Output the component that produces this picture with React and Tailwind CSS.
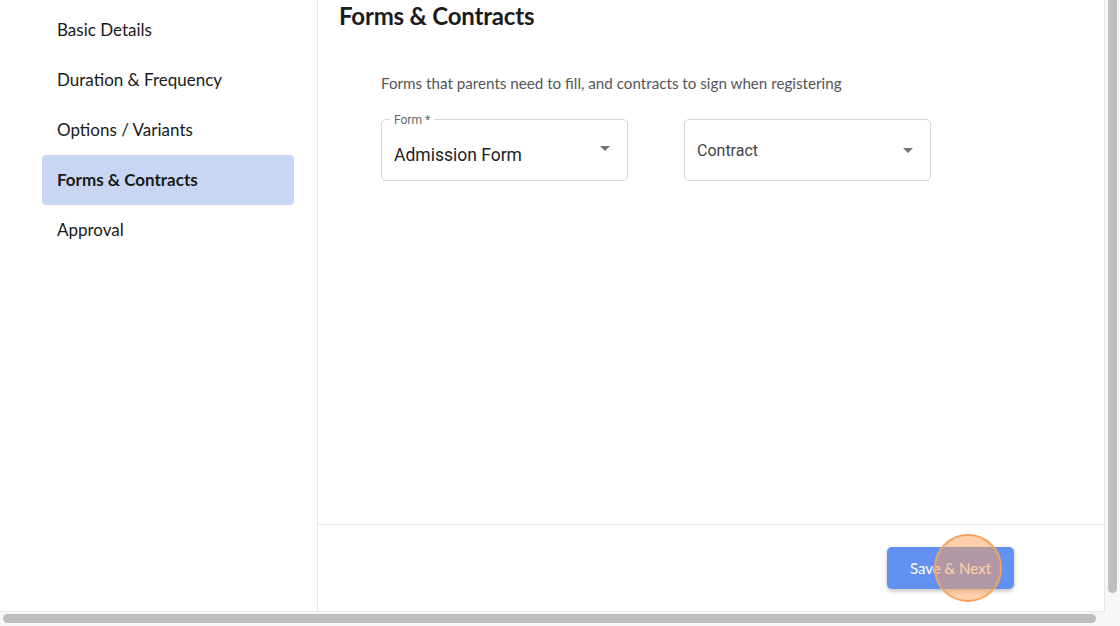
import { useState } from "react";

const steps = [
  "Basic Details",
  "Duration & Frequency",
  "Options / Variants",
  "Forms & Contracts",
  "Approval",
];

function Caret() {
  return (
    <svg width="24" height="24" viewBox="0 0 24 24" className="text-[#757575]">
      <path d="M7 10l5 5 5-5z" fill="currentColor" />
    </svg>
  );
}

function SelectBox({ label, value, placeholder }) {
  return (
    <div className="relative w-[247px] h-[62px] border border-[#d6d6d6] rounded-[5px] flex items-center pl-[12px] pr-[10px]">
      {label && (
        <span className="absolute -top-[6px] left-[8px] bg-white px-[4px] text-[12px] leading-[12px] text-[#666]">
          {label}
        </span>
      )}
      {value ? (
        <div className="flex-1 text-[17.5px] text-[#222] pt-[10px]">{value}</div>
      ) : (
        <div className="flex-1 text-[16px] text-[#444] pt-[2px]">{placeholder}</div>
      )}
      <div className={value ? "-mt-[4px]" : "mt-0"}>
        <Caret />
      </div>
    </div>
  );
}

export default function App() {
  const [active] = useState(3);

  return (
    <div className="w-[1120px] h-[626px] flex bg-white overflow-hidden font-['Lato',sans-serif]">
      <div className="w-[1105px] flex flex-col">
        <div className="flex h-[612px] border-b border-[#e8e8e8]">
          {/* sidebar */}
          <div className="w-[318px] border-r border-[#e6e6e6] pl-[42px] pr-[23px] pt-[5px] flex flex-col">
            {steps.map((s, i) => (
              <div
                key={s}
                className={
                  i === active
                    ? "h-[50px] flex items-center pl-[15px] rounded-[4px] bg-[#c8d6f3] text-[17px] font-bold text-[#1a1a1a]"
                    : "h-[50px] flex items-center pl-[15px] text-[17px] text-[#1a1a1a]"
                }
              >
                {s}
              </div>
            ))}
          </div>

          {/* main */}
          <div className="flex-1 border-r border-[#e6e6e6] flex flex-col">
            <div className="flex-1 pl-[21px]">
              <h1 className="text-[24px] leading-[30px] font-bold text-[#1c1c1c] pt-[1px] tracking-[-0.2px]">
                Forms &amp; Contracts
              </h1>
              <div className="pl-[42px] pt-[41px]">
                <p className="text-[15.2px] text-[#555]">
                  Forms that parents need to fill, and contracts to sign when registering
                </p>
                <div className="flex gap-[56px] mt-[24px] font-['Roboto',sans-serif]">
                  <SelectBox label="Form *" value="Admission Form" />
                  <SelectBox placeholder="Contract" />
                </div>
              </div>
            </div>
            <div className="h-[87px] border-t border-[#e6e6e6] flex justify-end items-start pt-[22px] pr-[90px]">
              <div className="relative">
                <button className="w-[127px] h-[42px] rounded-[5px] bg-[#6291f1] text-white text-[15px] shadow-[0_2px_4px_rgba(0,0,0,0.25)]">
                  Save &amp; Next
                </button>
                <div className="absolute left-[47px] -top-[13px] w-[68px] h-[68px] rounded-full border-2 border-[#f2a35f] bg-[rgba(255,160,90,0.5)]" />
              </div>
            </div>
          </div>
        </div>
        {/* horizontal scrollbar */}
        <div className="flex-1 bg-[#f7f7f7] pl-[3px] pr-[9px] pt-[2px]">
          <div className="h-[9px] rounded-full bg-[#bfbfbf]" />
        </div>
      </div>
      {/* vertical scrollbar */}
      <div className="flex-1 bg-[#f7f7f7] pl-[3px] pr-[3px]">
        <div className="h-[593px] rounded-b-full bg-[#bfbfbf]" />
      </div>
    </div>
  );
}
